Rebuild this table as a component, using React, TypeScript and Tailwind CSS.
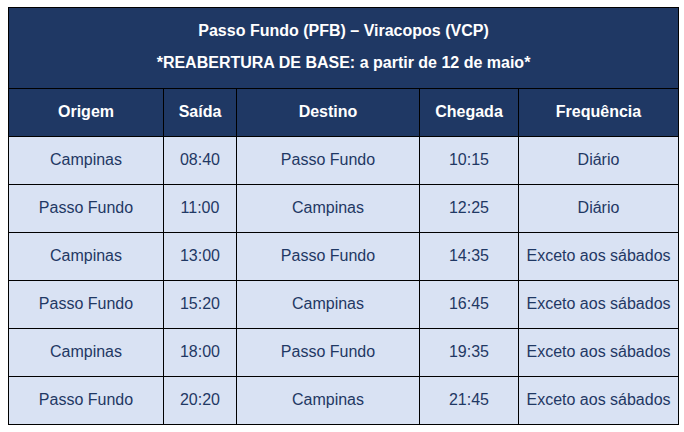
const rows = [
  ['Campinas', '08:40', 'Passo Fundo', '10:15', 'Diário'],
  ['Passo Fundo', '11:00', 'Campinas', '12:25', 'Diário'],
  ['Campinas', '13:00', 'Passo Fundo', '14:35', 'Exceto aos sábados'],
  ['Passo Fundo', '15:20', 'Campinas', '16:45', 'Exceto aos sábados'],
  ['Campinas', '18:00', 'Passo Fundo', '19:35', 'Exceto aos sábados'],
  ['Passo Fundo', '20:20', 'Campinas', '21:45', 'Exceto aos sábados'],
];

const headers = ['Origem', 'Saída', 'Destino', 'Chegada', 'Frequência'];

export default function App() {
  return (
    <div className="bg-white pl-[8px] pt-[7px] font-['Liberation_Sans',Arial,sans-serif]">
      <table className="w-[670px] table-fixed border-collapse text-[16px]">
        <colgroup>
          <col className="w-[155px]" />
          <col className="w-[73px]" />
          <col className="w-[183px]" />
          <col className="w-[99px]" />
          <col className="w-[160px]" />
        </colgroup>
        <thead>
          <tr>
            <th
              colSpan={5}
              className="h-[81px] border border-black bg-[#1f3864] p-0 pb-[3px] text-center font-bold leading-[32px] text-white"
            >
              <div>Passo Fundo (PFB) – Viracopos (VCP)</div>
              <div>*REABERTURA DE BASE: a partir de 12 de maio*</div>
            </th>
          </tr>
          <tr>
            {headers.map((h) => (
              <th
                key={h}
                className="h-[48px] border border-black bg-[#1f3864] p-0 pb-[2px] text-center font-bold text-white"
              >
                {h}
              </th>
            ))}
          </tr>
        </thead>
        <tbody>
          {rows.map((r, i) => (
            <tr key={i}>
              {r.map((c, j) => (
                <td
                  key={j}
                  className="h-[48px] whitespace-nowrap border border-black bg-[#d9e2f3] p-0 pb-[2px] text-center text-[#1f3864]"
                >
                  {c}
                </td>
              ))}
            </tr>
          ))}
        </tbody>
      </table>
    </div>
  );
}
